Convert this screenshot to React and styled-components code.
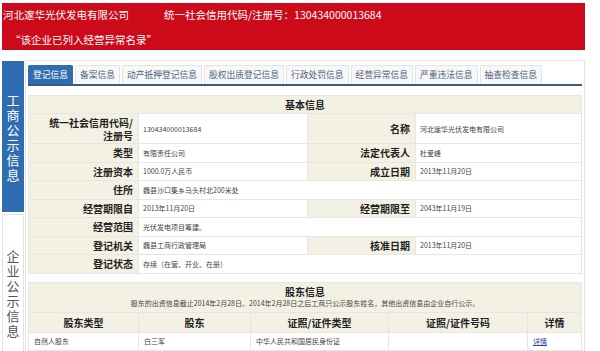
import React from 'react';
import styled, { createGlobalStyle } from 'styled-components';

const GlobalStyle = createGlobalStyle`
  html, body {
    margin: 0;
    padding: 0;
    overflow: hidden;
    background: #fff;
  }
  body {
    font-family: "Noto Sans CJK SC", "DejaVu Sans", sans-serif;
  }
`;

const Page = styled.div`
  width: 583px;
  padding: 3px 0 0 2px;
`;

const Banner = styled.div`
  background: #cc0a1a;
  color: #fff;
  height: 47px;
  box-sizing: border-box;
  padding: 5px 0 0 1px;
  display: flex;
  flex-direction: column;
  gap: 11px;
  font-size: 10.5px;
  line-height: 14px;
`;

const BannerLine = styled.div`
  display: flex;
  gap: ${(p) => p.$gap || 0}px;
  padding-left: ${(p) => p.$indent || 0}px;
  white-space: nowrap;
`;

const Body = styled.div`
  display: flex;
  gap: 1px;
  margin-top: 10px;
`;

const Side = styled.div`
  width: 22px;
  display: flex;
  flex-direction: column;
  gap: 2px;
  padding-top: 1px;
`;

const SideBlock = styled.div`
  height: ${(p) => p.$h}px;
  box-sizing: border-box;
  background: ${(p) => (p.$active ? '#2f6cb2' : '#fff')};
  color: ${(p) => (p.$active ? '#fff' : '#555')};
  border: 1px solid ${(p) => (p.$active ? '#2f6cb2' : '#e2e2e2')};
  display: flex;
  flex-direction: column;
  align-items: center;
  justify-content: ${(p) => (p.$active ? 'center' : 'flex-start')};
  padding-top: ${(p) => (p.$active ? 0 : 33)}px;
`;

const SideText = styled.div`
  width: 1em;
  word-break: break-all;
  text-align: center;
  font-size: 13px;
  line-height: 15px;
`;

const Panel = styled.div`
  width: 560px;
  box-sizing: border-box;
  border: 1px solid #e3e3e3;
  padding: 3px 2px 0 2px;
  height: 300px;
`;

const TabBar = styled.div`
  display: flex;
  gap: 2px;
  border-bottom: 2px solid #3e5b78;
  height: 20px;
`;

const Tab = styled.div`
  height: 19px;
  margin-top: 1px;
  box-sizing: border-box;
  padding: 0 4px;
  font-size: 8.75px;
  line-height: 18px;
  white-space: nowrap;
  border: 1px solid ${(p) => (p.$active ? '#2f6cb2' : '#e4e4e4')};
  border-bottom: none;
  border-radius: 2px 2px 0 0;
  background: ${(p) => (p.$active ? '#2f6cb2' : '#f8f8f8')};
  color: ${(p) => (p.$active ? '#fff' : '#4a6280')};
`;

const InfoGrid = styled.div`
  display: grid;
  grid-template-columns: ${(p) => p.$cols};
  grid-template-rows: ${(p) => p.$rows};
  gap: 1px;
  padding: 1px;
  background: #e6e6e2;
  margin-top: ${(p) => p.$mt}px;
`;

const TitleCell = styled.div`
  grid-column: 1 / -1;
  background: #f2f1e4;
  display: flex;
  flex-direction: column;
  align-items: center;
  justify-content: center;
  color: #222;
`;

const TitleText = styled.div`
  font-size: 10px;
  font-weight: bold;
  line-height: 12px;
`;

const Note = styled.div`
  font-size: 7px;
  line-height: 10px;
  color: #444;
`;

const Label = styled.div`
  background: #f2f1e4;
  font-size: 10px;
  font-weight: bold;
  color: #222;
  text-align: right;
  padding-right: 5px;
  display: flex;
  flex-direction: column;
  justify-content: center;
  line-height: 13px;
  white-space: nowrap;
`;

const Value = styled.div`
  background: #fff;
  font-size: 7px;
  color: #444;
  padding-left: 4px;
  display: flex;
  align-items: center;
  grid-column: ${(p) => (p.$wide ? 'span 3' : 'auto')};
  white-space: nowrap;
`;

const HeadCell = styled.div`
  background: #f2f1e4;
  font-size: 10px;
  font-weight: bold;
  color: #222;
  display: flex;
  align-items: center;
  justify-content: center;
`;

const Cell = styled.div`
  background: #fff;
  font-size: 7px;
  color: #444;
  padding-left: 5px;
  display: flex;
  align-items: center;
`;

const DetailLink = styled.a`
  color: #2a3f9e;
  text-decoration: underline;
`;

const tabs = ['登记信息', '备案信息', '动产抵押登记信息', '股权出质登记信息', '行政处罚信息', '经营异常信息', '严重违法信息', '抽查检查信息'];

const rows = [
  ['类型', '有限责任公司', '法定代表人', '杜爱峰'],
  ['注册资本', '1000.0万人民币', '成立日期', '2013年11月20日'],
  ['住所', '魏县沙口集乡马头村北200米处'],
  ['经营期限自', '2013年11月20日', '经营期限至', '2043年11月19日'],
  ['经营范围', '光伏发电项目筹建。'],
  ['登记机关', '魏县工商行政管理局', '核准日期', '2013年11月20日'],
  ['登记状态', '存续（在营、开业、在册）'],
];

export default function App() {
  return (
    <Page>
      <GlobalStyle />
      <Banner>
        <BannerLine $gap={35}>
          <span>河北邃华光伏发电有限公司</span>
          <span>统一社会信用代码/注册号：130434000013684</span>
        </BannerLine>
        <BannerLine $indent={7}>“该企业已列入经营异常名录”</BannerLine>
      </Banner>
      <Body>
        <Side>
          <SideBlock $active $h={151}>
            <SideText>工商公示信息</SideText>
          </SideBlock>
          <SideBlock $h={140}>
            <SideText>企业公示信息</SideText>
          </SideBlock>
        </Side>
        <Panel>
          <TabBar>
            {tabs.map((t, i) => (
              <Tab key={t} $active={i === 0}>{t}</Tab>
            ))}
          </TabBar>
          <InfoGrid
            $cols="109px 168px 107px 1fr"
            $rows="17px 29px repeat(7, 17.5px)"
            $mt={9}
          >
            <TitleCell><TitleText>基本信息</TitleText></TitleCell>
            <Label>
              <span>统一社会信用代码/<br />注册号</span>
            </Label>
            <Value>130434000013684</Value>
            <Label>名称</Label>
            <Value>河北邃华光伏发电有限公司</Value>
            {rows.map((r) => (
              <React.Fragment key={r[0]}>
                <Label>{r[0]}</Label>
                <Value $wide={r.length === 2}>{r[1]}</Value>
                {r.length === 4 && (
                  <>
                    <Label>{r[2]}</Label>
                    <Value>{r[3]}</Value>
                  </>
                )}
              </React.Fragment>
            ))}
          </InfoGrid>
          <InfoGrid
            $cols="109px 111px 137px 138px 1fr"
            $rows="29px 19px 17px 17px"
            $mt={8}
          >
            <TitleCell>
              <TitleText>股东信息</TitleText>
              <Note>股东的出资信息截止2014年2月28日。2014年2月28日之后工商只公示股东姓名，其他出资信息由企业自行公示。</Note>
            </TitleCell>
            <HeadCell>股东类型</HeadCell>
            <HeadCell>股东</HeadCell>
            <HeadCell>证照/证件类型</HeadCell>
            <HeadCell>证照/证件号码</HeadCell>
            <HeadCell>详情</HeadCell>
            <Cell>自然人股东</Cell>
            <Cell>白三军</Cell>
            <Cell>中华人民共和国居民身份证</Cell>
            <Cell />
            <Cell><DetailLink>详情</DetailLink></Cell>
            <Cell />
            <Cell />
            <Cell />
            <Cell />
            <Cell />
          </InfoGrid>
        </Panel>
      </Body>
    </Page>
  );
}
